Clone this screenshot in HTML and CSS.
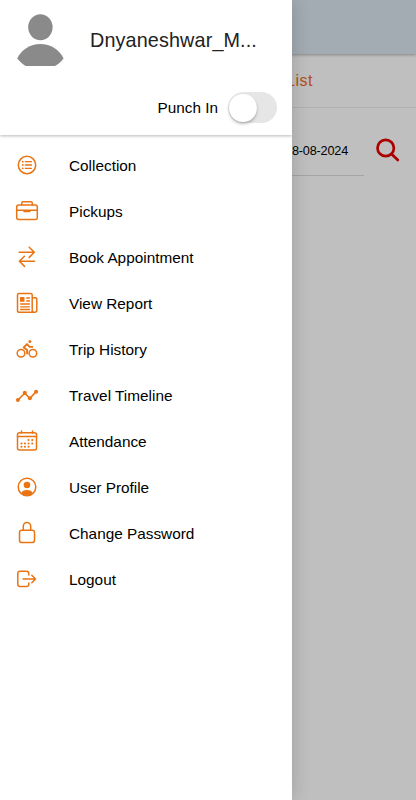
FILE: index.html
```html
<!DOCTYPE html>
<html lang="en">
<head>
<meta charset="utf-8">
<title>Menu</title>
<link rel="stylesheet" href="styles.css">
</head>
<body>
<main class="page">
  <div class="toolbar"></div>
  <div class="title"><span>List</span></div>
  <div class="filter">
    <div class="date">8-08-2024</div>
    <svg class="search" width="24" height="24" viewBox="0 0 24 24"><circle cx="9.700" cy="10" r="8.200"/><path d="M15.800 16.200l6 5.800"/></svg>
  </div>
</main>
<div class="backdrop"></div>
<aside class="drawer">
  <header class="header">
    <div class="user">
      <svg class="avatar" width="48" height="54" viewBox="0 0 48 54"><ellipse cx="23.400" cy="13.200" rx="12.200" ry="13"/><path d="M.2 44.500C4.500 35.500 13 30 23.400 30S42.300 35.500 46.600 44.500L43.500 48Q41 50.500 38 52H8.500Q6 50.500 3.500 48Z"/></svg>
      <div class="name">Dnyaneshwar_M...</div>
    </div>
    <div class="punch"><span>Punch In</span><div class="toggle"><div class="knob"></div></div></div>
  </header>
  <nav class="menu">
    <a class="item"><svg class="icon" viewBox="0 0 24 24"><circle cx="12" cy="12" r="8.700"/><path d="M10.300 8.700h6.200M10.300 12h6.200M10.300 15.300h6.200" stroke-width="1.300"/><path d="M7.700 8.700h.1M7.700 12h.1M7.700 15.300h.1" stroke-width="1.800"/></svg><span>Collection</span></a>
    <a class="item"><svg class="icon" viewBox="0 0 24 24"><rect x="1.700" y="6" width="20.600" height="14.500" rx="2"/><path d="M6.700 6V4.200Q6.700 2.800 8 2.800h8q1.300 0 1.300 1.400V6M1.700 11.200h20.600"/><path class="solid" d="M8.300 11h7.400v1.400q0 .8-.8.8H9.100q-.8 0-.8-.8z"/></svg><span>Pickups</span></a>
    <a class="item"><svg class="icon" viewBox="0 0 24 24"><path d="M4.200 7.300h15M14.200 2.200l5.100 5.100-5.100 5.100M19.500 16.300h-15M9.500 11.200l-5.100 5.100 5.100 5.100"/></svg><span>Book Appointment</span></a>
    <a class="item"><svg class="icon" viewBox="0 0 24 24"><path d="M17.200 20.800V4q0-1.500-1.500-1.500H4Q2.500 2.500 2.500 4v15.500Q2.500 21.300 4.300 21.300h15.500q2 0 2-2V8q0-1.300-1.300-1.300h-3.300M17.200 19.300q0 2 2 2"/><path d="M11.700 7h2.800M11.700 10h2.800M5.600 13h8.900M5.600 15.800h8.900M5.600 18.500h8.900" stroke-width="1.300"/><rect class="solid" x="5" y="6" width="4.500" height="4.700" rx=".5"/></svg><span>View Report</span></a>
    <a class="item"><svg class="icon" viewBox="0 0 24 24"><circle cx="6" cy="16.300" r="3.800"/><circle cx="17.900" cy="16.300" r="3.800"/><circle class="solid" cx="14.900" cy="4.500" r="1.500"/><path d="M12 7.200L8.700 10.500l3.400 2.500v3.500M12.200 7.300l2.400 2.600h2.700" stroke-width="1.900"/></svg><span>Trip History</span></a>
    <a class="item"><svg class="icon" viewBox="0 0 24 24"><path d="M3 17l6.800-7 5 5.500L21 8.700" stroke-width="1.700"/><g class="solid"><circle cx="2.900" cy="17" r="2"/><circle cx="9.800" cy="9.800" r="2"/><circle cx="14.900" cy="15.300" r="2"/><circle cx="21.100" cy="8.700" r="2"/></g></svg><span>Travel Timeline</span></a>
    <a class="item"><svg class="icon" viewBox="0 0 24 24"><rect x="2.500" y="3.800" width="19" height="17.200" rx="2"/><path d="M2.500 7.500h19M6.500 2v2M17.500 2v2"/><path d="M13.500 11h.1M17.200 11h.1M6.400 14.400h.1M9.900 14.400h.1M13.500 14.400h.1M17.200 14.400h.1M6.400 17.800h.1M9.900 17.800h.1M13.500 17.800h.1" stroke-width="2"/></svg><span>Attendance</span></a>
    <a class="item"><svg class="icon" viewBox="0 0 24 24"><circle cx="12" cy="12" r="8.800"/><circle class="solid" cx="12" cy="10" r="3.300"/><path class="solid" d="M5.800 18.300q1.800-3.400 6.200-3.400t6.200 3.400q-2.500 2.700-6.200 2.700t-6.200-2.700z"/></svg><span>User Profile</span></a>
    <a class="item"><svg class="icon" viewBox="0 0 24 24"><rect x="4.500" y="9.200" width="15" height="12.300" rx="2.200"/><path d="M8.300 9.200V5.200a3.700 3.700 0 0 1 7.400 0v4"/></svg><span>Change Password</span></a>
    <a class="item"><svg class="icon" viewBox="0 0 24 24"><path d="M13.800 8V6.500q0-2.300-2.300-2.300H5q-2.200 0-2.200 2.300v10.700q0 2.300 2.200 2.300h6.500q2.300 0 2.300-2.300V16M8 12h12.300M16.800 8.300l3.700 3.700-3.700 3.700"/></svg><span>Logout</span></a>
  </nav>
</aside>
</body>
</html>
```

FILE: styles.css
```css
* { box-sizing: border-box; }
body {
  margin: 0;
  width: 416px;
  height: 800px;
  overflow: hidden;
  position: relative;
  background: #fff;
  color: #000;
  font-family: "Liberation Sans", Arial, sans-serif;
}
.page { height: 800px; }
.toolbar {
  position: relative;
  height: 54px;
  background: #dae4ef;
  box-shadow: 0 1px 3px rgba(0, 0, 0, .3);
}
.title {
  height: 54px;
  border-bottom: 1px solid #ededed;
  padding: 0 103px 0 0;
  display: flex;
  align-items: center;
  justify-content: flex-end;
  color: #f26a1b;
  font-size: 16px;
  letter-spacing: .5px;
}
.filter {
  display: flex;
  justify-content: flex-end;
  gap: 12px;
  height: 68px;
  padding-right: 16px;
}
.date {
  width: 104px;
  border-bottom: 1px solid #dcdcdc;
  padding: 35px 16px 0 0;
  text-align: right;
  font-size: 12.700px;
  line-height: 16px;
  letter-spacing: -.2px;
}
.search {
  margin-top: 30px;
  fill: none;
  stroke: #e60000;
  stroke-width: 2.700;
  stroke-linecap: round;
}
.backdrop {
  position: absolute;
  inset: 0;
  background: rgba(0, 0, 0, .25);
}
.drawer {
  position: absolute;
  left: 0;
  top: 0;
  width: 292px;
  height: 800px;
  background: #fff;
  box-shadow: 0 0 18px rgba(0, 0, 0, .18);
}
.header {
  height: 135px;
  box-shadow: 0 1px 3px rgba(0, 0, 0, .28);
  clip-path: inset(0 0 -6px 0);
}
.user {
  display: flex;
  height: 81px;
  padding: 14px 0 0 17px;
}
.avatar { fill: #8a8a8a; }
.name {
  margin-left: 25px;
  font-size: 19.800px;
  line-height: 52px;
  letter-spacing: .13px;
  color: #222;
}
.punch {
  display: flex;
  align-items: center;
  justify-content: flex-end;
  gap: 10px;
  height: 53px;
  padding-right: 15px;
  font-size: 15.300px;
}
.toggle {
  width: 49px;
  height: 31px;
  padding: 1.500px 1px;
  border-radius: 16px;
  background: #e6e6e6;
}
.knob {
  width: 28px;
  height: 28px;
  border-radius: 50%;
  background: #fff;
  box-shadow: 0 2px 3px rgba(0, 0, 0, .25);
}
.menu { padding-top: 7.600px; }
.item {
  display: flex;
  align-items: center;
  gap: 30px;
  height: 46px;
  padding-left: 15px;
  font-size: 15.350px;
}
.icon {
  width: 24px;
  height: 24px;
  margin-bottom: 1.400px;
  fill: none;
  stroke: #ea7414;
  stroke-width: 1.500;
  stroke-linecap: round;
  stroke-linejoin: round;
}
.solid { fill: #ea7414; stroke: none; }
```
